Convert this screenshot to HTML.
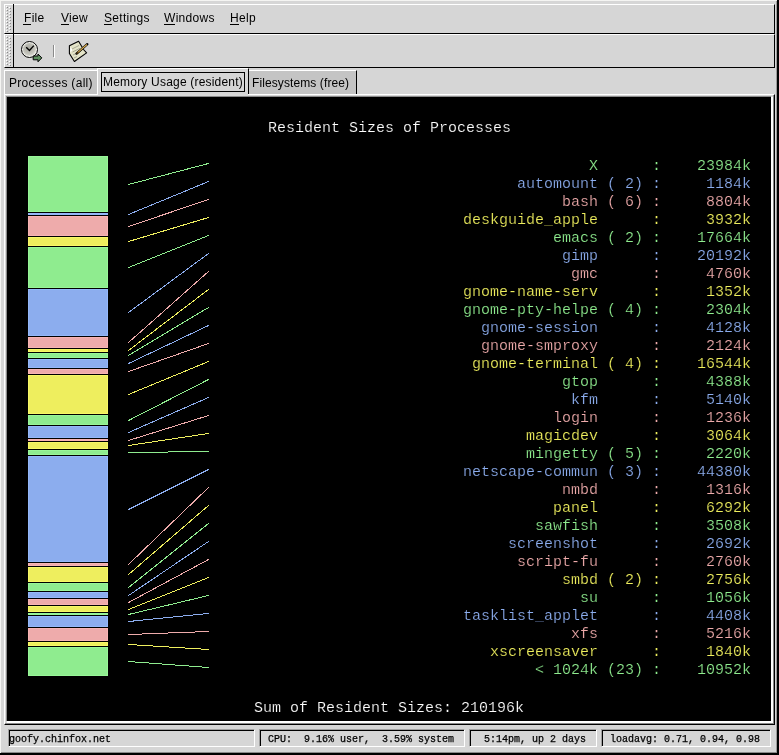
<!DOCTYPE html>
<html><head><meta charset="utf-8">
<style>
html,body{margin:0;padding:0;}
body{width:779px;height:755px;overflow:hidden;position:relative;background:#d6d6d6;font-family:"Liberation Sans",sans-serif;}
.a{position:absolute;}
.mt{font-size:12px;color:#000;position:absolute;white-space:pre;line-height:14px;letter-spacing:0.3px;will-change:transform;}
.u{text-decoration:underline;}
.sb{font-family:"Liberation Mono",monospace;font-size:10px;position:absolute;white-space:pre;line-height:12px;color:#000;will-change:transform;-webkit-text-stroke:0.25px #000;}
svg text{font-family:"Liberation Mono",monospace;font-size:15px;white-space:pre;stroke:#000;stroke-width:0.2px;}
</style></head><body>
<!-- window frame -->
<div class="a" style="left:0;top:0;width:779px;height:1px;background:#f4f4f2"></div>
<div class="a" style="left:0;top:0;width:1px;height:755px;background:#f4f4f2"></div>
<div class="a" style="left:777px;top:0;width:2px;height:755px;background:#000"></div>
<div class="a" style="left:776px;top:1px;width:1px;height:754px;background:#9a9a9a"></div>
<div class="a" style="left:0;top:753px;width:779px;height:2px;background:#000"></div>
<div class="a" style="left:1px;top:752px;width:776px;height:1px;background:#8a8a8a"></div>

<!-- menubar -->
<div class="a" style="left:4px;top:4px;width:771px;height:30px;box-sizing:border-box;border-top:1px solid #fff;border-left:1px solid #fff;border-bottom:1px solid #000;border-right:1px solid #000"></div>
<div class="a" style="left:13px;top:4px;width:1px;height:30px;background:#000"></div>
<div class="mt" style="left:24px;top:11px">File</div><div class="a" style="left:23px;top:24px;width:8px;height:1px;background:#000"></div>
<div class="mt" style="left:61px;top:11px">View</div><div class="a" style="left:61px;top:24px;width:8px;height:1px;background:#000"></div>
<div class="mt" style="left:104px;top:11px">Settings</div><div class="a" style="left:104px;top:24px;width:8px;height:1px;background:#000"></div>
<div class="mt" style="left:164px;top:11px">Windows</div><div class="a" style="left:164px;top:24px;width:11px;height:1px;background:#000"></div>
<div class="mt" style="left:230px;top:11px">Help</div><div class="a" style="left:230px;top:24px;width:9px;height:1px;background:#000"></div>

<!-- toolbar -->
<div class="a" style="left:4px;top:34px;width:771px;height:34px;box-sizing:border-box;border-top:1px solid #fff;border-left:1px solid #fff;border-bottom:1px solid #000;border-right:1px solid #000"></div>
<div class="a" style="left:13px;top:34px;width:1px;height:34px;background:#000"></div>
<div class="a" style="left:53px;top:45px;width:1px;height:12px;background:#8a8a8a"></div>
<div class="a" style="left:54px;top:45px;width:1px;height:13px;background:#fff"></div>

<!-- notebook -->
<div class="a" style="left:4px;top:94px;width:771px;height:631px;box-sizing:border-box;border-top:1px solid #fff;border-left:1px solid #fff;border-bottom:1px solid #000;border-right:1px solid #000"></div>
<div class="a" style="left:7px;top:97px;width:764px;height:624px;background:#000"></div>
<div class="a" style="left:7px;top:721px;width:766px;height:2px;background:#fff"></div>
<div class="a" style="left:771px;top:97px;width:2px;height:626px;background:#fff"></div>
<div class="a" style="left:6px;top:96px;width:765px;height:1px;background:#8a8a8a"></div>
<div class="a" style="left:6px;top:96px;width:1px;height:625px;background:#8a8a8a"></div>
<div class="a" style="left:5px;top:723px;width:769px;height:1px;background:#8a8a8a"></div>
<div class="a" style="left:773px;top:95px;width:1px;height:629px;background:#8a8a8a"></div>

<!-- icons -->
<svg class="a" style="left:0;top:0" width="100" height="70">
<defs><radialGradient id="cg" cx="0.45" cy="0.4" r="0.6"><stop offset="0" stop-color="#a8a8a0"/><stop offset="0.75" stop-color="#c4c4bc"/><stop offset="1" stop-color="#e0e0d8"/></radialGradient></defs>
<g shape-rendering="crispEdges"><rect x="6" y="6" width="1" height="1" fill="#fff"/><rect x="7" y="7" width="1" height="1" fill="#8a8a8a"/><rect x="9" y="7" width="1" height="1" fill="#fff"/><rect x="10" y="8" width="1" height="1" fill="#8a8a8a"/><rect x="6" y="9" width="1" height="1" fill="#fff"/><rect x="7" y="10" width="1" height="1" fill="#8a8a8a"/><rect x="9" y="10" width="1" height="1" fill="#fff"/><rect x="10" y="11" width="1" height="1" fill="#8a8a8a"/><rect x="6" y="12" width="1" height="1" fill="#fff"/><rect x="7" y="13" width="1" height="1" fill="#8a8a8a"/><rect x="9" y="13" width="1" height="1" fill="#fff"/><rect x="10" y="14" width="1" height="1" fill="#8a8a8a"/><rect x="6" y="15" width="1" height="1" fill="#fff"/><rect x="7" y="16" width="1" height="1" fill="#8a8a8a"/><rect x="9" y="16" width="1" height="1" fill="#fff"/><rect x="10" y="17" width="1" height="1" fill="#8a8a8a"/><rect x="6" y="18" width="1" height="1" fill="#fff"/><rect x="7" y="19" width="1" height="1" fill="#8a8a8a"/><rect x="9" y="19" width="1" height="1" fill="#fff"/><rect x="10" y="20" width="1" height="1" fill="#8a8a8a"/><rect x="6" y="21" width="1" height="1" fill="#fff"/><rect x="7" y="22" width="1" height="1" fill="#8a8a8a"/><rect x="9" y="22" width="1" height="1" fill="#fff"/><rect x="10" y="23" width="1" height="1" fill="#8a8a8a"/><rect x="6" y="24" width="1" height="1" fill="#fff"/><rect x="7" y="25" width="1" height="1" fill="#8a8a8a"/><rect x="9" y="25" width="1" height="1" fill="#fff"/><rect x="10" y="26" width="1" height="1" fill="#8a8a8a"/><rect x="6" y="27" width="1" height="1" fill="#fff"/><rect x="7" y="28" width="1" height="1" fill="#8a8a8a"/><rect x="9" y="28" width="1" height="1" fill="#fff"/><rect x="10" y="29" width="1" height="1" fill="#8a8a8a"/><rect x="6" y="30" width="1" height="1" fill="#fff"/><rect x="7" y="31" width="1" height="1" fill="#8a8a8a"/><rect x="9" y="31" width="1" height="1" fill="#fff"/><rect x="6" y="36" width="1" height="1" fill="#fff"/><rect x="7" y="37" width="1" height="1" fill="#8a8a8a"/><rect x="9" y="37" width="1" height="1" fill="#fff"/><rect x="10" y="38" width="1" height="1" fill="#8a8a8a"/><rect x="6" y="39" width="1" height="1" fill="#fff"/><rect x="7" y="40" width="1" height="1" fill="#8a8a8a"/><rect x="9" y="40" width="1" height="1" fill="#fff"/><rect x="10" y="41" width="1" height="1" fill="#8a8a8a"/><rect x="6" y="42" width="1" height="1" fill="#fff"/><rect x="7" y="43" width="1" height="1" fill="#8a8a8a"/><rect x="9" y="43" width="1" height="1" fill="#fff"/><rect x="10" y="44" width="1" height="1" fill="#8a8a8a"/><rect x="6" y="45" width="1" height="1" fill="#fff"/><rect x="7" y="46" width="1" height="1" fill="#8a8a8a"/><rect x="9" y="46" width="1" height="1" fill="#fff"/><rect x="10" y="47" width="1" height="1" fill="#8a8a8a"/><rect x="6" y="48" width="1" height="1" fill="#fff"/><rect x="7" y="49" width="1" height="1" fill="#8a8a8a"/><rect x="9" y="49" width="1" height="1" fill="#fff"/><rect x="10" y="50" width="1" height="1" fill="#8a8a8a"/><rect x="6" y="51" width="1" height="1" fill="#fff"/><rect x="7" y="52" width="1" height="1" fill="#8a8a8a"/><rect x="9" y="52" width="1" height="1" fill="#fff"/><rect x="10" y="53" width="1" height="1" fill="#8a8a8a"/><rect x="6" y="54" width="1" height="1" fill="#fff"/><rect x="7" y="55" width="1" height="1" fill="#8a8a8a"/><rect x="9" y="55" width="1" height="1" fill="#fff"/><rect x="10" y="56" width="1" height="1" fill="#8a8a8a"/><rect x="6" y="57" width="1" height="1" fill="#fff"/><rect x="7" y="58" width="1" height="1" fill="#8a8a8a"/><rect x="9" y="58" width="1" height="1" fill="#fff"/><rect x="10" y="59" width="1" height="1" fill="#8a8a8a"/><rect x="6" y="60" width="1" height="1" fill="#fff"/><rect x="7" y="61" width="1" height="1" fill="#8a8a8a"/><rect x="9" y="61" width="1" height="1" fill="#fff"/><rect x="10" y="62" width="1" height="1" fill="#8a8a8a"/><rect x="6" y="63" width="1" height="1" fill="#fff"/><rect x="7" y="64" width="1" height="1" fill="#8a8a8a"/><rect x="9" y="64" width="1" height="1" fill="#fff"/><rect x="10" y="65" width="1" height="1" fill="#8a8a8a"/></g>
<circle cx="29.5" cy="49.5" r="8" fill="#f4f4f0" stroke="#000" stroke-width="1"/>
<circle cx="29.5" cy="49.5" r="6.6" fill="url(#cg)"/>
<path d="M26.2 47.2 L29.5 50.4 L33.8 45.6" fill="none" stroke="#000" stroke-width="1.4"/>
<path d="M33.2 56 L38 56 L38 54 L41.8 57.9 L38 61.8 L38 59.8 L33.2 59.8 Z" fill="#5e9060" stroke="#000" stroke-width="1" stroke-linejoin="miter"/>
<path d="M78.6 41.2 L69.4 45.7 L69.4 53.5 L74.4 61.5 L86.6 52.9 L83.5 49.5 L81.6 46.3 Z" fill="#e4e4c8" stroke="#000" stroke-width="1.1" stroke-linejoin="round"/>
<path d="M70.3 47 L72.5 50 L70.3 52.5 Z" fill="#fff"/>
<path d="M72 49 L79 45.5 M72.5 52 L80 48.3 M73 55 L78 52.5 M74 58 L77 56.5" stroke="#9a9a88" stroke-width="0.8"/>
<path d="M76.6 53.6 L87.3 44.2" stroke="#000" stroke-width="2.4" stroke-linecap="round"/>
<path d="M77.6 52.7 L86.9 44.5" stroke="#e0b050" stroke-width="1.1"/>
<path d="M76.6 53.6 L78.2 52.2" stroke="#6a4a10" stroke-width="1.2"/>
</svg>
<!-- tabs -->
<div class="a" style="left:4px;top:70px;width:93px;height:24px;box-sizing:border-box;background:#c4c4c4;border-top:1px solid #fff;border-left:1px solid #fff"></div>
<div class="mt" style="left:9px;top:76px">Processes (all)</div>
<div class="a" style="left:249px;top:70px;width:108px;height:24px;box-sizing:border-box;background:#c4c4c4;border-top:1px solid #fff;border-right:1px solid #000"></div>
<div class="mt" style="left:252px;top:76px;letter-spacing:0.1px">Filesystems (free)</div>
<div class="a" style="left:97px;top:68px;width:152px;height:26px;box-sizing:border-box;background:#d6d6d6;border-top:1px solid #fff;border-left:1px solid #fff;border-right:1px solid #000"></div><div class="a" style="left:97px;top:94px;width:1px;height:1px;background:#fff"></div><div class="a" style="left:98px;top:94px;width:150px;height:2px;background:#d8d8d8"></div>
<div class="a" style="left:101px;top:72px;width:144px;height:20px;box-sizing:border-box;border:1px solid #000"></div>
<div class="mt" style="left:103px;top:75px;letter-spacing:0.2px">Memory Usage (resident)</div>

<!-- chart -->
<svg class="a" style="left:0;top:0" width="779" height="755" shape-rendering="crispEdges">
<rect x="28" y="156" width="80" height="56" fill="#98f698"/><rect x="29" y="157" width="78" height="54" fill="#8fec8f"/><line x1="128.5" y1="184.5" x2="208.5" y2="163.5" stroke="#8fec8f" stroke-width="1" stroke-linecap="square"/><rect x="28" y="213" width="80" height="2" fill="#94b8fa"/><line x1="128.5" y1="214.5" x2="208.5" y2="181.5" stroke="#8cadee" stroke-width="1" stroke-linecap="square"/><rect x="28" y="216" width="80" height="20" fill="#f8b4b4"/><rect x="29" y="217" width="78" height="18" fill="#eeabab"/><line x1="128.5" y1="226.5" x2="208.5" y2="199.5" stroke="#eeabab" stroke-width="1" stroke-linecap="square"/><rect x="28" y="237" width="80" height="9" fill="#f8f866"/><rect x="29" y="238" width="78" height="7" fill="#eeee5e"/><line x1="128.5" y1="241.5" x2="208.5" y2="217.5" stroke="#eeee5e" stroke-width="1" stroke-linecap="square"/><rect x="28" y="247" width="80" height="41" fill="#98f698"/><rect x="29" y="248" width="78" height="39" fill="#8fec8f"/><line x1="128.5" y1="267.5" x2="208.5" y2="235.5" stroke="#8fec8f" stroke-width="1" stroke-linecap="square"/><rect x="28" y="289" width="80" height="47" fill="#94b8fa"/><rect x="29" y="290" width="78" height="45" fill="#8cadee"/><line x1="128.5" y1="312.5" x2="208.5" y2="253.5" stroke="#8cadee" stroke-width="1" stroke-linecap="square"/><rect x="28" y="337" width="80" height="11" fill="#f8b4b4"/><rect x="29" y="338" width="78" height="9" fill="#eeabab"/><line x1="128.5" y1="342.5" x2="208.5" y2="271.5" stroke="#eeabab" stroke-width="1" stroke-linecap="square"/><rect x="28" y="349" width="80" height="3" fill="#f8f866"/><rect x="29" y="350" width="78" height="1" fill="#eeee5e"/><line x1="128.5" y1="350.5" x2="208.5" y2="289.5" stroke="#eeee5e" stroke-width="1" stroke-linecap="square"/><rect x="28" y="353" width="80" height="5" fill="#98f698"/><rect x="29" y="354" width="78" height="3" fill="#8fec8f"/><line x1="128.5" y1="355.5" x2="208.5" y2="307.5" stroke="#8fec8f" stroke-width="1" stroke-linecap="square"/><rect x="28" y="359" width="80" height="9" fill="#94b8fa"/><rect x="29" y="360" width="78" height="7" fill="#8cadee"/><line x1="128.5" y1="363.5" x2="208.5" y2="325.5" stroke="#8cadee" stroke-width="1" stroke-linecap="square"/><rect x="28" y="369" width="80" height="5" fill="#f8b4b4"/><rect x="29" y="370" width="78" height="3" fill="#eeabab"/><line x1="128.5" y1="371.5" x2="208.5" y2="343.5" stroke="#eeabab" stroke-width="1" stroke-linecap="square"/><rect x="28" y="375" width="80" height="39" fill="#f8f866"/><rect x="29" y="376" width="78" height="37" fill="#eeee5e"/><line x1="128.5" y1="394.5" x2="208.5" y2="361.5" stroke="#eeee5e" stroke-width="1" stroke-linecap="square"/><rect x="28" y="415" width="80" height="10" fill="#98f698"/><rect x="29" y="416" width="78" height="8" fill="#8fec8f"/><line x1="128.5" y1="420.5" x2="208.5" y2="379.5" stroke="#8fec8f" stroke-width="1" stroke-linecap="square"/><rect x="28" y="426" width="80" height="12" fill="#94b8fa"/><rect x="29" y="427" width="78" height="10" fill="#8cadee"/><line x1="128.5" y1="432.5" x2="208.5" y2="397.5" stroke="#8cadee" stroke-width="1" stroke-linecap="square"/><rect x="28" y="439" width="80" height="2" fill="#f8b4b4"/><line x1="128.5" y1="440.5" x2="208.5" y2="415.5" stroke="#eeabab" stroke-width="1" stroke-linecap="square"/><rect x="28" y="442" width="80" height="7" fill="#f8f866"/><rect x="29" y="443" width="78" height="5" fill="#eeee5e"/><line x1="128.5" y1="445.5" x2="208.5" y2="433.5" stroke="#eeee5e" stroke-width="1" stroke-linecap="square"/><rect x="28" y="450" width="80" height="5" fill="#98f698"/><rect x="29" y="451" width="78" height="3" fill="#8fec8f"/><line x1="128.5" y1="452.5" x2="208.5" y2="451.5" stroke="#8fec8f" stroke-width="1" stroke-linecap="square"/><rect x="28" y="456" width="80" height="106" fill="#94b8fa"/><rect x="29" y="457" width="78" height="104" fill="#8cadee"/><line x1="128.5" y1="509.5" x2="208.5" y2="469.5" stroke="#8cadee" stroke-width="1" stroke-linecap="square"/><rect x="28" y="563" width="80" height="3" fill="#f8b4b4"/><rect x="29" y="564" width="78" height="1" fill="#eeabab"/><line x1="128.5" y1="564.5" x2="208.5" y2="487.5" stroke="#eeabab" stroke-width="1" stroke-linecap="square"/><rect x="28" y="567" width="80" height="15" fill="#f8f866"/><rect x="29" y="568" width="78" height="13" fill="#eeee5e"/><line x1="128.5" y1="574.5" x2="208.5" y2="505.5" stroke="#eeee5e" stroke-width="1" stroke-linecap="square"/><rect x="28" y="583" width="80" height="8" fill="#98f698"/><rect x="29" y="584" width="78" height="6" fill="#8fec8f"/><line x1="128.5" y1="587.5" x2="208.5" y2="523.5" stroke="#8fec8f" stroke-width="1" stroke-linecap="square"/><rect x="28" y="592" width="80" height="6" fill="#94b8fa"/><rect x="29" y="593" width="78" height="4" fill="#8cadee"/><line x1="128.5" y1="595.5" x2="208.5" y2="541.5" stroke="#8cadee" stroke-width="1" stroke-linecap="square"/><rect x="28" y="599" width="80" height="6" fill="#f8b4b4"/><rect x="29" y="600" width="78" height="4" fill="#eeabab"/><line x1="128.5" y1="602.5" x2="208.5" y2="559.5" stroke="#eeabab" stroke-width="1" stroke-linecap="square"/><rect x="28" y="606" width="80" height="6" fill="#f8f866"/><rect x="29" y="607" width="78" height="4" fill="#eeee5e"/><line x1="128.5" y1="609.5" x2="208.5" y2="577.5" stroke="#eeee5e" stroke-width="1" stroke-linecap="square"/><rect x="28" y="613" width="80" height="2" fill="#98f698"/><line x1="128.5" y1="614.5" x2="208.5" y2="595.5" stroke="#8fec8f" stroke-width="1" stroke-linecap="square"/><rect x="28" y="616" width="80" height="11" fill="#94b8fa"/><rect x="29" y="617" width="78" height="9" fill="#8cadee"/><line x1="128.5" y1="621.5" x2="208.5" y2="613.5" stroke="#8cadee" stroke-width="1" stroke-linecap="square"/><rect x="28" y="628" width="80" height="13" fill="#f8b4b4"/><rect x="29" y="629" width="78" height="11" fill="#eeabab"/><line x1="128.5" y1="634.5" x2="208.5" y2="631.5" stroke="#eeabab" stroke-width="1" stroke-linecap="square"/><rect x="28" y="642" width="80" height="4" fill="#f8f866"/><rect x="29" y="643" width="78" height="2" fill="#eeee5e"/><line x1="128.5" y1="644.5" x2="208.5" y2="649.5" stroke="#eeee5e" stroke-width="1" stroke-linecap="square"/><rect x="28" y="647" width="80" height="29" fill="#98f698"/><rect x="29" y="648" width="78" height="27" fill="#8fec8f"/><line x1="128.5" y1="661.5" x2="208.5" y2="667.5" stroke="#8fec8f" stroke-width="1" stroke-linecap="square"/>
<text x="268" y="132" fill="#ffffff">Resident&#160;Sizes&#160;of&#160;Processes</text>
<text x="463" y="170" fill="#8fec8f">&#160;&#160;&#160;&#160;&#160;&#160;&#160;&#160;&#160;&#160;&#160;&#160;&#160;&#160;X&#160;&#160;&#160;&#160;&#160;&#160;:&#160;&#160;&#160;&#160;23984k</text><text x="463" y="188" fill="#8cadee">&#160;&#160;&#160;&#160;&#160;&#160;automount&#160;(&#160;2)&#160;:&#160;&#160;&#160;&#160;&#160;1184k</text><text x="463" y="206" fill="#eeabab">&#160;&#160;&#160;&#160;&#160;&#160;&#160;&#160;&#160;&#160;&#160;bash&#160;(&#160;6)&#160;:&#160;&#160;&#160;&#160;&#160;8804k</text><text x="463" y="224" fill="#eeee5e">deskguide_apple&#160;&#160;&#160;&#160;&#160;&#160;:&#160;&#160;&#160;&#160;&#160;3932k</text><text x="463" y="242" fill="#8fec8f">&#160;&#160;&#160;&#160;&#160;&#160;&#160;&#160;&#160;&#160;emacs&#160;(&#160;2)&#160;:&#160;&#160;&#160;&#160;17664k</text><text x="463" y="260" fill="#8cadee">&#160;&#160;&#160;&#160;&#160;&#160;&#160;&#160;&#160;&#160;&#160;gimp&#160;&#160;&#160;&#160;&#160;&#160;:&#160;&#160;&#160;&#160;20192k</text><text x="463" y="278" fill="#eeabab">&#160;&#160;&#160;&#160;&#160;&#160;&#160;&#160;&#160;&#160;&#160;&#160;gmc&#160;&#160;&#160;&#160;&#160;&#160;:&#160;&#160;&#160;&#160;&#160;4760k</text><text x="463" y="296" fill="#eeee5e">gnome-name-serv&#160;&#160;&#160;&#160;&#160;&#160;:&#160;&#160;&#160;&#160;&#160;1352k</text><text x="463" y="314" fill="#8fec8f">gnome-pty-helpe&#160;(&#160;4)&#160;:&#160;&#160;&#160;&#160;&#160;2304k</text><text x="463" y="332" fill="#8cadee">&#160;&#160;gnome-session&#160;&#160;&#160;&#160;&#160;&#160;:&#160;&#160;&#160;&#160;&#160;4128k</text><text x="463" y="350" fill="#eeabab">&#160;&#160;gnome-smproxy&#160;&#160;&#160;&#160;&#160;&#160;:&#160;&#160;&#160;&#160;&#160;2124k</text><text x="463" y="368" fill="#eeee5e">&#160;gnome-terminal&#160;(&#160;4)&#160;:&#160;&#160;&#160;&#160;16544k</text><text x="463" y="386" fill="#8fec8f">&#160;&#160;&#160;&#160;&#160;&#160;&#160;&#160;&#160;&#160;&#160;gtop&#160;&#160;&#160;&#160;&#160;&#160;:&#160;&#160;&#160;&#160;&#160;4388k</text><text x="463" y="404" fill="#8cadee">&#160;&#160;&#160;&#160;&#160;&#160;&#160;&#160;&#160;&#160;&#160;&#160;kfm&#160;&#160;&#160;&#160;&#160;&#160;:&#160;&#160;&#160;&#160;&#160;5140k</text><text x="463" y="422" fill="#eeabab">&#160;&#160;&#160;&#160;&#160;&#160;&#160;&#160;&#160;&#160;login&#160;&#160;&#160;&#160;&#160;&#160;:&#160;&#160;&#160;&#160;&#160;1236k</text><text x="463" y="440" fill="#eeee5e">&#160;&#160;&#160;&#160;&#160;&#160;&#160;magicdev&#160;&#160;&#160;&#160;&#160;&#160;:&#160;&#160;&#160;&#160;&#160;3064k</text><text x="463" y="458" fill="#8fec8f">&#160;&#160;&#160;&#160;&#160;&#160;&#160;mingetty&#160;(&#160;5)&#160;:&#160;&#160;&#160;&#160;&#160;2220k</text><text x="463" y="476" fill="#8cadee">netscape-commun&#160;(&#160;3)&#160;:&#160;&#160;&#160;&#160;44380k</text><text x="463" y="494" fill="#eeabab">&#160;&#160;&#160;&#160;&#160;&#160;&#160;&#160;&#160;&#160;&#160;nmbd&#160;&#160;&#160;&#160;&#160;&#160;:&#160;&#160;&#160;&#160;&#160;1316k</text><text x="463" y="512" fill="#eeee5e">&#160;&#160;&#160;&#160;&#160;&#160;&#160;&#160;&#160;&#160;panel&#160;&#160;&#160;&#160;&#160;&#160;:&#160;&#160;&#160;&#160;&#160;6292k</text><text x="463" y="530" fill="#8fec8f">&#160;&#160;&#160;&#160;&#160;&#160;&#160;&#160;sawfish&#160;&#160;&#160;&#160;&#160;&#160;:&#160;&#160;&#160;&#160;&#160;3508k</text><text x="463" y="548" fill="#8cadee">&#160;&#160;&#160;&#160;&#160;screenshot&#160;&#160;&#160;&#160;&#160;&#160;:&#160;&#160;&#160;&#160;&#160;2692k</text><text x="463" y="566" fill="#eeabab">&#160;&#160;&#160;&#160;&#160;&#160;script-fu&#160;&#160;&#160;&#160;&#160;&#160;:&#160;&#160;&#160;&#160;&#160;2760k</text><text x="463" y="584" fill="#eeee5e">&#160;&#160;&#160;&#160;&#160;&#160;&#160;&#160;&#160;&#160;&#160;smbd&#160;(&#160;2)&#160;:&#160;&#160;&#160;&#160;&#160;2756k</text><text x="463" y="602" fill="#8fec8f">&#160;&#160;&#160;&#160;&#160;&#160;&#160;&#160;&#160;&#160;&#160;&#160;&#160;su&#160;&#160;&#160;&#160;&#160;&#160;:&#160;&#160;&#160;&#160;&#160;1056k</text><text x="463" y="620" fill="#8cadee">tasklist_applet&#160;&#160;&#160;&#160;&#160;&#160;:&#160;&#160;&#160;&#160;&#160;4408k</text><text x="463" y="638" fill="#eeabab">&#160;&#160;&#160;&#160;&#160;&#160;&#160;&#160;&#160;&#160;&#160;&#160;xfs&#160;&#160;&#160;&#160;&#160;&#160;:&#160;&#160;&#160;&#160;&#160;5216k</text><text x="463" y="656" fill="#eeee5e">&#160;&#160;&#160;xscreensaver&#160;&#160;&#160;&#160;&#160;&#160;:&#160;&#160;&#160;&#160;&#160;1840k</text><text x="463" y="674" fill="#8fec8f">&#160;&#160;&#160;&#160;&#160;&#160;&#160;&#160;&lt;&#160;1024k&#160;(23)&#160;:&#160;&#160;&#160;&#160;10952k</text>
<text x="254" y="712" fill="#ffffff">Sum&#160;of&#160;Resident&#160;Sizes:&#160;210196k</text>
</svg>

<!-- statusbar -->
<div class="a" style="left:8px;top:729px;width:247px;height:18px;box-sizing:border-box;border-top:1px solid #a0a0a0;border-left:1px solid #a0a0a0;border-bottom:1px solid #fff;border-right:1px solid #fff"><div style="position:absolute;left:0;top:0;right:0;height:1px;background:#000"></div><div style="position:absolute;left:0;top:0;bottom:0;width:1px;background:#000"></div></div>
<div class="sb" style="left:9px;top:734px">goofy.chinfox.net</div>
<div class="a" style="left:259px;top:729px;width:206px;height:18px;box-sizing:border-box;border-top:1px solid #a0a0a0;border-left:1px solid #a0a0a0;border-bottom:1px solid #fff;border-right:1px solid #fff"><div style="position:absolute;left:0;top:0;right:0;height:1px;background:#000"></div><div style="position:absolute;left:0;top:0;bottom:0;width:1px;background:#000"></div></div>
<div class="sb" style="left:268px;top:734px">CPU:  9.16% user,  3.59% system</div>
<div class="a" style="left:469px;top:729px;width:128px;height:18px;box-sizing:border-box;border-top:1px solid #a0a0a0;border-left:1px solid #a0a0a0;border-bottom:1px solid #fff;border-right:1px solid #fff"><div style="position:absolute;left:0;top:0;right:0;height:1px;background:#000"></div><div style="position:absolute;left:0;top:0;bottom:0;width:1px;background:#000"></div></div>
<div class="sb" style="left:484px;top:734px">5:14pm, up 2 days</div>
<div class="a" style="left:601px;top:729px;width:170px;height:18px;box-sizing:border-box;border-top:1px solid #a0a0a0;border-left:1px solid #a0a0a0;border-bottom:1px solid #fff;border-right:1px solid #fff"><div style="position:absolute;left:0;top:0;right:0;height:1px;background:#000"></div><div style="position:absolute;left:0;top:0;bottom:0;width:1px;background:#000"></div></div>
<div class="sb" style="left:610px;top:734px">loadavg: 0.71, 0.94, 0.98</div>
</body></html>
